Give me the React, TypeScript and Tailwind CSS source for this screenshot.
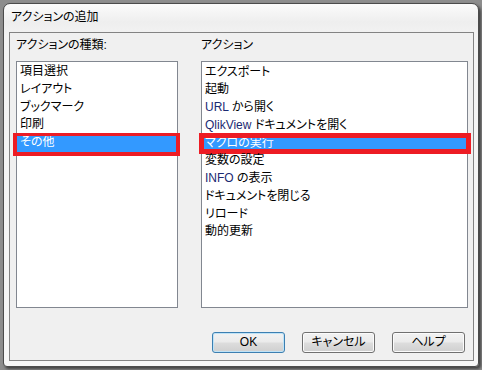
import React from "react";

// dialog: アクションの追加 (Windows 7 style)
const leftItems = ["項目選択", "レイアウト", "ブックマーク", "印刷", "その他"];

const Latin = ({ children }: { children: React.ReactNode }) => (
  <span className="text-[#1b2a72]">{children}</span>
);

const rightItems: React.ReactNode[] = [
  "エクスポート",
  "起動",
  <>
    <Latin>URL</Latin> から開く
  </>,
  <>
    <Latin>QlikView</Latin> ドキュメントを開く
  </>,
  "マクロの実行",
  "変数の設定",
  <>
    <Latin>INFO</Latin> の表示
  </>,
  "ドキュメントを閉じる",
  "リロード",
  "動的更新",
];

const Button = ({ label, primary }: { label: string; primary?: boolean }) => (
  <button
    className={`w-[73px] h-[21px] rounded-[3px] border text-[12px] leading-[19px] text-black bg-[linear-gradient(to_bottom,#f2f2f2_0%,#ebebeb_48%,#dddddd_52%,#cfcfcf_100%)] ${
      primary
        ? "border-[#3c7fb1] shadow-[inset_0_0_0_1px_#bfe3f7]"
        : "border-[#707070] shadow-[inset_0_0_0_1px_#fbfbfb]"
    }`}
  >
    {label}
  </button>
);

export default function App() {
  return (
    <div className="w-[482px] h-[370px] overflow-hidden bg-[#8d8d8d] pl-[3px] pt-[3px] font-['Liberation_Sans','Noto_Sans_CJK_JP',sans-serif] [font-feature-settings:'palt'] text-[12px] text-black">
      <div className="w-[476px] h-[364px] flex flex-col rounded-t-[7px] rounded-b-[4px] border border-[#4b4b4b] bg-[linear-gradient(to_bottom,#fbfbfb_0%,#eeeeee_5%,#f3f3f3_9%,#f6f6f6_100%)] shadow-[2px_2px_3px_rgba(0,0,0,0.55)]">
        {/* title */}
        <div className="h-[28px] pl-[7px] pt-[6px] leading-[14px] whitespace-nowrap">
          アクションの追加
        </div>

        {/* client area */}
        <div className="ml-[5px] mr-[4px] h-[329px] border border-[#838383] bg-[#f0f0f0] flex flex-col">
          <div className="flex gap-[23px] pl-[6px] pt-[5px]">
            {/* left column */}
            <div className="flex flex-col w-[162px]">
              <div className="leading-[14px] whitespace-nowrap">アクションの種類:</div>
              <div className="mt-[9px] h-[247px] border border-[#828790] bg-white pt-px">
                {leftItems.map((item, i) => (
                  <div
                    key={item}
                    className={`relative h-[17.75px] leading-[17.75px] pl-[3px] whitespace-nowrap ${
                      i === 4 ? "bg-[#3399ff] text-white" : ""
                    }`}
                  >
                    {item}
                    {i === 4 && (
                      <span className="absolute -left-[4px] -right-[3px] -top-px -bottom-[4px] border-4 border-t-[3px] border-[#ed1c24]" />
                    )}
                  </div>
                ))}
              </div>
            </div>

            {/* right column */}
            <div className="flex flex-col w-[267px]">
              <div className="leading-[14px] whitespace-nowrap">アクション</div>
              <div className="mt-[9px] h-[247px] border border-[#828790] bg-white pt-[1.5px]">
                {rightItems.map((item, i) => (
                  <div
                    key={i}
                    className={`relative h-[17.75px] leading-[17.75px] pl-[3px] whitespace-nowrap ${
                      i === 4 ? "bg-[#3399ff] text-white" : ""
                    }`}
                  >
                    {item}
                    {i === 4 && (
                      <span className="absolute -left-[3px] -right-[4px] -top-[2px] -bottom-[2px] border-[5px] border-[#ed1c24]" />
                    )}
                  </div>
                ))}
              </div>
            </div>
          </div>

          {/* buttons */}
          <div className="mt-[24px] flex justify-end gap-[17px] pr-[8px]">
            <Button label="OK" primary />
            <Button label="キャンセル" />
            <Button label="ヘルプ" />
          </div>
        </div>
      </div>
    </div>
  );
}
